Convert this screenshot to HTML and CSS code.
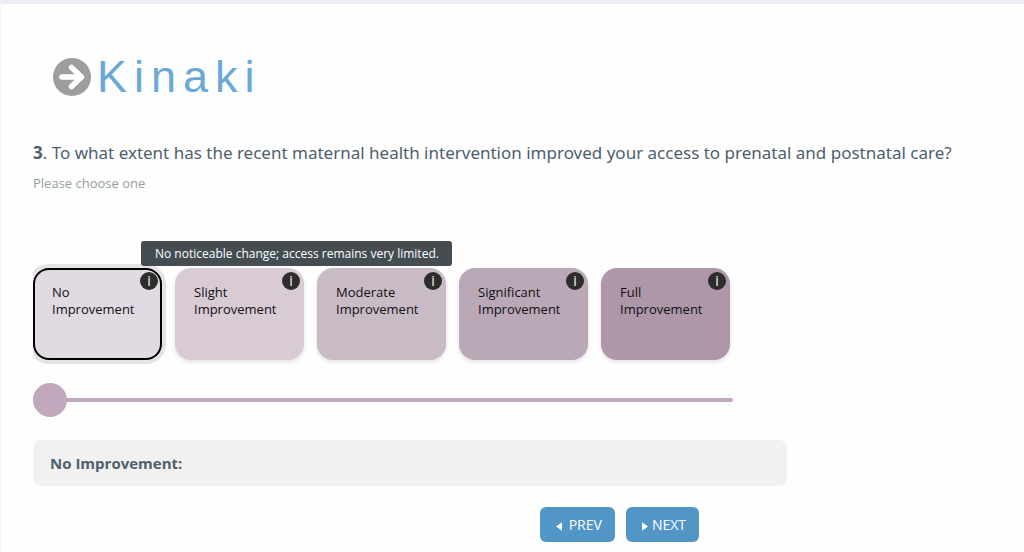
FILE: index.html
```html
<!DOCTYPE html>
<html lang="en">
<head>
  <meta charset="UTF-8">
  <meta name="viewport" content="width=device-width, initial-scale=1">
  <title>Kinaki</title>
  <link rel="stylesheet" href="styles.css">
</head>
<body>
  <main class="survey">
    <header class="logo">
      <svg class="logo-icon" viewBox="0 0 38 38" aria-hidden="true">
        <circle cx="19" cy="19" r="19" fill="#9c9d9f"/>
        <path d="M9 19H28M18.5 9.5L28.5 19L18.5 28.5" fill="none" stroke="#fff" stroke-width="5.5" stroke-linecap="round" stroke-linejoin="round"/>
      </svg>
      <span class="logo-name">Kinaki</span>
    </header>

    <h1 class="question" id="question"><strong>3</strong>. To what extent has the recent maternal health intervention improved your access to prenatal and postnatal care?</h1>
    <p class="hint">Please choose one</p>

    <div class="options" role="group" aria-labelledby="question">
      <div class="option">
        <button type="button" class="card level-1 selected">No<br>Improvement</button>
        <button type="button" class="info">i</button>
        <div class="tooltip" role="tooltip">No noticeable change; access remains very limited.</div>
      </div>
      <div class="option">
        <button type="button" class="card level-2">Slight<br>Improvement</button>
        <button type="button" class="info">i</button>
      </div>
      <div class="option">
        <button type="button" class="card level-3">Moderate<br>Improvement</button>
        <button type="button" class="info">i</button>
      </div>
      <div class="option">
        <button type="button" class="card level-4">Significant<br>Improvement</button>
        <button type="button" class="info">i</button>
      </div>
      <div class="option">
        <button type="button" class="card level-5">Full<br>Improvement</button>
        <button type="button" class="info">i</button>
      </div>
    </div>

    <input class="slider" type="range" min="1" max="5" value="1" aria-labelledby="question">

    <div class="result">No Improvement:</div>

    <nav class="actions">
      <button type="button" class="nav-btn">
        <svg class="arrow" viewBox="0 0 7 10" aria-hidden="true"><path d="M7 0V10L0 5Z" fill="#fff"/></svg>
        <span class="prev-text">PREV</span>
      </button>
      <button type="button" class="nav-btn">
        <svg class="arrow" viewBox="0 0 7 10" aria-hidden="true"><path d="M0 0V10L7 5Z" fill="#fff"/></svg>
        <span>NEXT</span>
      </button>
    </nav>
  </main>
</body>
</html>
```

FILE: styles.css
```css
* {
  box-sizing: border-box;
}
body {
  margin: 0;
  border-top: 4px solid #ebeff5;
  border-left: 1px solid #f3f5f8;
  background-color: #fefefe;
  color: #4e606d;
  font-family: "Open Sans", "Noto Sans", sans-serif;
}
button {
  border: none;
  font-family: inherit;
  cursor: pointer;
}
.survey {
  padding: 48px 32px 10px;
}
.logo {
  display: flex;
  align-items: center;
  gap: 6px;
  height: 50px;
  padding-left: 20px;
}
.logo-icon {
  width: 38px;
  height: 38px;
}
.logo-name {
  color: #6aa8d6;
  font-family: "Liberation Sans", Arial, sans-serif;
  font-size: 45px;
  line-height: 50px;
  letter-spacing: 7px;
}
.question {
  margin: 38px 0 0;
  font-family: "Noto Sans", "Open Sans", sans-serif;
  font-size: 17px;
  font-weight: 400;
  line-height: 26px;
}
.hint {
  margin: 8px 0 0;
  color: #929da3;
  font-size: 13px;
  line-height: 18px;
}
.options {
  display: grid;
  grid-template-columns: repeat(5, 1fr);
  gap: 13px;
  max-width: 697px;
  margin-top: 76px;
}
.option {
  position: relative;
}
.card {
  display: flex;
  align-items: flex-start;
  width: 100%;
  height: 92px;
  padding: 16px 19px;
  border-radius: 16px;
  box-shadow: 0 2px 4px rgba(0, 0, 0, 0.12);
  color: #111;
  font-size: 13px;
  line-height: 17px;
  text-align: left;
}
.level-1 { background-color: #e2dae2; }
.level-2 { background-color: #d8cbd4; }
.level-3 { background-color: #c9bbc5; }
.level-4 { background-color: #bba8b7; }
.level-5 { background-color: #ae97a9; }
.selected {
  padding: 14px 17px;
  border: 2px solid #000;
  box-shadow: 0 0 0 4px #e4e4e4;
}
/* the options area cuts the focus ring off on the left */
.option:first-child {
  clip-path: inset(-30px -400px -10px 0);
  z-index: 1;
}
.info {
  position: absolute;
  top: 4px;
  right: 4px;
  width: 18px;
  height: 18px;
  padding: 0;
  border-radius: 50%;
  background-color: #2d2d2d;
  color: #fff;
  font-size: 14px;
  line-height: 18px;
}
.tooltip {
  position: absolute;
  bottom: calc(100% + 2px);
  left: 108px;
  padding: 4px 13px 4px 14px;
  border-radius: 3px;
  background-color: #454d52;
  color: #fff;
  font-size: 12px;
  line-height: 17px;
  white-space: nowrap;
}
.slider {
  display: block;
  appearance: none;
  width: 100%;
  max-width: 700px;
  height: 34px;
  margin: 23px 0 0;
  background: transparent;
}
.slider::-webkit-slider-runnable-track {
  height: 4px;
  border-radius: 2px;
  background-color: #c1a9bd;
}
.slider::-webkit-slider-thumb {
  appearance: none;
  width: 34px;
  height: 34px;
  margin-top: -15px;
  border-radius: 50%;
  background-color: #c1a9bd;
}
.result {
  max-width: 754px;
  margin-top: 23px;
  padding: 12px 17px;
  border-radius: 8px;
  background-color: #f1f1f1;
  font-size: 15px;
  font-weight: 700;
  line-height: 22px;
}
.actions {
  display: flex;
  justify-content: flex-end;
  gap: 11px;
  max-width: 666px;
  margin-top: 21px;
}
.nav-btn {
  display: flex;
  align-items: center;
  gap: 4px;
  height: 35px;
  padding: 0 13px 0 16px;
  border-radius: 6px;
  background-color: #5296c8;
  color: #fff;
  font-size: 14px;
}
.arrow {
  width: 6px;
  height: 9px;
  margin-top: 3px;
}
.prev-text {
  padding-left: 3px;
}
```
